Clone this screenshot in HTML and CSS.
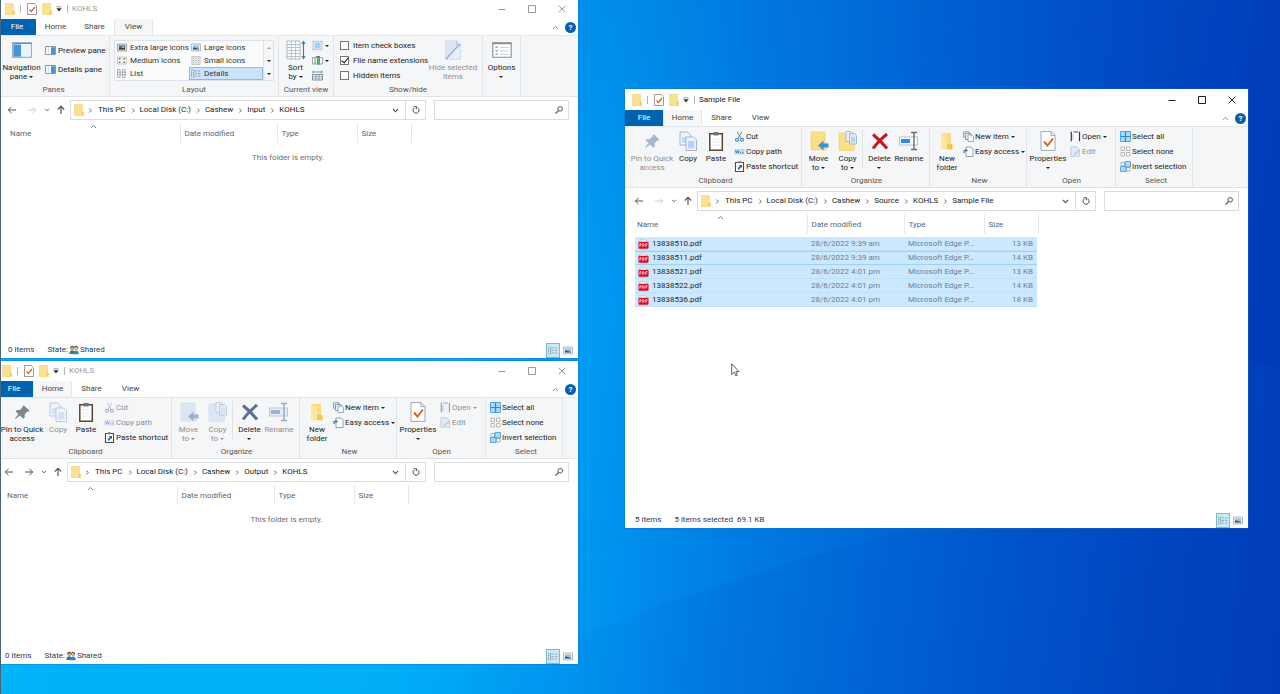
FILE: index.html
```html
<!DOCTYPE html>
<html lang="en">
<head>
<meta charset="utf-8">
<title>Desktop</title>
<link rel="stylesheet" href="styles.css">
</head>
<body>
<svg class="sprite" aria-hidden="true">
  <linearGradient id="fade" x1="0" x2="1"><stop offset="0" stop-color="#0048b8" stop-opacity="0"/><stop offset=".4" stop-color="#0048b8" stop-opacity=".12"/><stop offset="1" stop-color="#0048b8" stop-opacity="0"/></linearGradient>
  <symbol id="folder" viewBox="0 0 10 12"><path d="M.5.5h8v7l1 .6v3.4h-9z" fill="#fbe293"/><path d="M.5.5h8v7l1 .6v3.4h-9z" fill="none" stroke="#efd06d" stroke-width=".6"/><path d="M7.6 8h1.9v3.4H7.6z" fill="#f2cb5c"/></symbol>
  <symbol id="check" viewBox="0 0 10 12"><path d="M.5.5h6.700l2.300 2.300v8.700h-9z" fill="#fff" stroke="#9a9a9a"/><path d="M2.500 6.500l1.800 2L8 4" fill="none" stroke="#d0603a" stroke-width="1.200"/></symbol>
  <symbol id="qat" viewBox="0 0 6 6"><path d="M.5.8h5M.8 2.500h4.400L3 5.200z" fill="#333" stroke="#333" stroke-width=".5"/></symbol>
  <symbol id="min" viewBox="0 0 8 8"><path d="M.5 4.500h7" stroke="currentColor"/></symbol>
  <symbol id="max" viewBox="0 0 8 8"><path d="M.5.5h7v7h-7z" fill="none" stroke="currentColor"/></symbol>
  <symbol id="close" viewBox="0 0 8 8"><path d="M.7.7l6.600 6.600M7.300.7L.7 7.300" stroke="currentColor"/></symbol>
  <symbol id="up-caret" viewBox="0 0 7 5"><path d="M1 4l2.500-2.600L6 4" fill="none" stroke="currentColor" stroke-width=".9"/></symbol>
  <symbol id="dn-caret" viewBox="0 0 7 5"><path d="M1 1l2.500 2.600L6 1" fill="none" stroke="currentColor" stroke-width="1.100"/></symbol>
  <symbol id="rt-caret" viewBox="0 0 5 7"><path d="M1.300 1.500l2 2-2 2" fill="none" stroke="currentColor" stroke-width=".9"/></symbol>
  <symbol id="back" viewBox="0 0 10 10"><path d="M9 5H1.300M4.500 1.800L1.300 5l3.200 3.200" fill="none" stroke="currentColor"/></symbol>
  <symbol id="fwd" viewBox="0 0 10 10"><path d="M1 5h7.700M5.500 1.800L8.700 5 5.500 8.200" fill="none" stroke="currentColor"/></symbol>
  <symbol id="up" viewBox="0 0 10 10"><path d="M5 9V1.300M1.800 4.500L5 1.300l3.200 3.200" fill="none" stroke="currentColor" stroke-width="1.200"/></symbol>
  <symbol id="refresh" viewBox="0 0 10 10"><path d="M3.300 2.800A3 3 0 1 0 6.800 2.800M2.600 1.800l3-.2-.3 2.600" fill="none" stroke="currentColor"/></symbol>
  <symbol id="search" viewBox="0 0 10 10"><circle cx="6.200" cy="3.800" r="2.300" fill="none" stroke="currentColor"/><path d="M4.600 5.500L1.500 8.600" stroke="currentColor" stroke-width="1.200"/></symbol>
  <symbol id="pin" viewBox="0 0 20 20"><path d="M12 3.500l5.500 5.200-1.200 1-1-.2-2.700 3 .1 3-1.400 1.200-3.300-3.300L3.500 17l-.6-.2 3.600-4.700-3-2.700L5 8l3-.1 2.600-2.700-.1-.9z" fill="var(--pin,#a9b7cc)"/></symbol>
  <symbol id="copy" viewBox="0 0 20 20"><path d="M2 1h7.500l3 3v10H2z" fill="#eef4fc" stroke="var(--ln,#94a6bf)" stroke-width=".8"/><path d="M4 6h6v6H4z" fill="var(--in,#c5daf3)"/><path d="M8 6h7.500l3 3v10.500H8z" fill="#f0f5fd" stroke="var(--ln,#94a6bf)" stroke-width=".8"/><path d="M10 10h6.500v7.500H10z" fill="var(--in,#b9d3f2)"/></symbol>
  <symbol id="paste" viewBox="0 0 20 20"><path d="M3.800 2.800h12.500v16.400H3.800z" fill="#fff" stroke="#5d4630" stroke-width="1.500"/><path d="M7.500 1h5v3.500h-5z" fill="#70757c"/><path d="M6 8h8M6 11h8M6 14h8" stroke="#dbe3ee" stroke-width=".8"/></symbol>
  <symbol id="cut" viewBox="0 0 11 11"><path d="M3.200 1l4 6.500M7.800 1l-4 6.500" stroke="var(--ln,#6b7688)" stroke-width=".9"/><circle cx="3" cy="8.700" r="1.500" fill="none" stroke="var(--arr,#2f87c9)" stroke-width="1.100"/><circle cx="8" cy="8.700" r="1.500" fill="none" stroke="var(--arr,#2f87c9)" stroke-width="1.100"/></symbol>
  <symbol id="path" viewBox="0 0 11 11"><path d="M.5 3h10v5.500H.5z" fill="var(--in,#b7d6f1)"/><path d="M1.500 4.500l1 2.500 1-2.500M4.500 5v2M6.200 6.800h.8M8 6.800h1.500" fill="none" stroke="var(--deep,#2d6da6)" stroke-width=".9"/></symbol>
  <symbol id="shortcut" viewBox="0 0 11 11"><path d="M1.500 1.500h8v9h-8z" fill="#fff" stroke="#57473a" stroke-width="1.100"/><path d="M4 .3h3v1.900H4z" fill="#777"/><path d="M3 4h5v5H3z" fill="#e5effb"/><path d="M4 8.500V7l2-2-1-1h3v3L7 6 5 8.500z" fill="#1e5da8"/></symbol>
  <symbol id="move" viewBox="0 0 20 20"><path d="M2 1h14v10l1.500 1v7H2z" fill="var(--fold,#fbdf86)" stroke="var(--fedge,#efcf6c)" stroke-width=".6"/><path d="M19.500 12.500v4h-5V19.500L9 14.500l5.500-5v3z" fill="var(--arr,#3a94d4)"/></symbol>
  <symbol id="copyto" viewBox="0 0 20 20"><path d="M1 2h14v10l1.500 1v6.500H1z" fill="var(--fold,#fbdf86)" stroke="var(--fedge,#efcf6c)" stroke-width=".6"/><path d="M8 .5h5l1.500 1.500v8.500H8z" fill="#eaf1fa" stroke="var(--ln,#8fa2bb)" stroke-width=".7"/><path d="M11.500 2.500h5L18.500 4.500v8.500h-7z" fill="#dfeaf7" stroke="var(--ln,#8fa2bb)" stroke-width=".7"/><path d="M13 6h4v5h-4z" fill="var(--in,#b9d3ee)"/></symbol>
  <symbol id="delete" viewBox="0 0 20 20"><path d="M3 3.500Q10 9 17 17.500M17 3Q9 9 3 17.500" fill="none" stroke="var(--x,#c8161d)" stroke-width="3"/></symbol>
  <symbol id="rename" viewBox="0 0 20 20"><path d="M.5 6h18v8H.5z" fill="var(--box,#fff)" stroke="var(--ln,#9eb2ca)" stroke-width=".8"/><path d="M2 8h9v4H2z" fill="var(--arr,#2c8ae0)"/><path d="M12 1.500h6M12 18.500h6M15 1.500v17" stroke="var(--ibeam,#666d78)" stroke-width="1.400"/></symbol>
  <symbol id="newfolder" viewBox="0 0 20 20"><path d="M4 2h10v11l2 1v4H4z" fill="#fbdc7d"/><path d="M4 2l6 3v14l-6-2z" fill="#ffe79c"/><path d="M10 13h5v5.500l-5-.5z" fill="#f0c654"/></symbol>
  <symbol id="newitem" viewBox="0 0 11 11"><path d="M.5.800h5.500v5.500H.5z" fill="#dbeaf7" stroke="#62839c" stroke-width=".7"/><path d="M2.500 2.500H8v6H2.500z" fill="#e9f2fa" stroke="#62839c" stroke-width=".7"/><path d="M5 4h4l1.500 1.500v5H5z" fill="#f8fafc" stroke="#7b8995" stroke-width=".7"/></symbol>
  <symbol id="easy" viewBox="0 0 11 11"><path d="M3 1h5l2 2v7.500H3z" fill="#fff" stroke="#818b94" stroke-width=".8"/><path d="M.5 7V4h2V2.500L5 4.500 2.500 6.300V5H1.700v2z" fill="#347fae"/></symbol>
  <symbol id="props" viewBox="0 0 20 20"><path d="M3 .600h10l4 4v14.800H3z" fill="#fff" stroke="#8b929b" stroke-width=".8"/><path d="M13 .600v4h4" fill="none" stroke="#8b929b" stroke-width=".8"/><path d="M6 10.500l3.500 4L15 7.500" fill="none" stroke="#db6323" stroke-width="2"/></symbol>
  <symbol id="open" viewBox="0 0 11 11"><path d="M.8.800h9.400v9.400H.8z" fill="var(--pg,#fff)"/><path d="M1.300.800v9.400M9.500.800v9.400" stroke="var(--deep,#26395c)" stroke-width="1.200"/><path d="M3.500 1h4.500" stroke="var(--deep,#26395c)" stroke-width=".9"/><path d="M3 3v6" stroke="var(--arr,#a9bdd8)" stroke-width=".8"/></symbol>
  <symbol id="edit" viewBox="0 0 11 11"><path d="M1 .800h6l2.500 2.500v7H1z" fill="#e2eaf7" stroke="#b9c6dd" stroke-width=".8"/><path d="M3 8.500l5.500-5 1.500 1.500-5.500 4.500z" fill="#c1cfe6"/></symbol>
  <symbol id="selall" viewBox="0 0 11 11"><path d="M.5.500h10v10H.5z" fill="#a8d8fb" stroke="#4fa7e4"/><path d="M5.500.5v10M.5 5.500h10" stroke="#3488cc" stroke-width="1.200"/></symbol>
  <symbol id="selnone" viewBox="0 0 11 11"><path d="M1 1h3.500v3.500H1zM6.500 1H10v3.500H6.500zM1 6.500h3.500V10H1zM6.500 6.500H10V10H6.500z" fill="#fff" stroke="#a5a9ad" stroke-width=".8"/></symbol>
  <symbol id="invert" viewBox="0 0 11 11"><path d="M1 1.500h3.500V5H1zM6.500 6.500H10V10H6.500z" fill="#fff" stroke="#8fa0ae" stroke-width=".8"/><path d="M5 .5h5.500V6H5zM.5 5.500H6v5H.5z" fill="#a8d8fb" stroke="#4698d6" stroke-width=".8"/></symbol>
  <symbol id="navpane" viewBox="0 0 20 16"><path d="M.8.800h18.400v14.400H.8z" fill="#fff" stroke="#8b99a8" stroke-width="1.200"/><path d="M1.500 2.500H9v12H1.500z" fill="#3d97de"/><path d="M.8 1.500h18.400" stroke="#77899b"/><path d="M9 2.500h10v12H9z" fill="#eaf4fd"/></symbol>
  <symbol id="pane" viewBox="0 0 11 9"><path d="M.5.500h10v8H.5z" fill="#fff" stroke="#71808f" stroke-width=".8"/><path d="M6 1.200h4v6.800H6z" fill="#3d97de"/><path d="M3.300 1v7.500" stroke="#b6c2cd" stroke-width=".7"/></symbol>
  <symbol id="xl" viewBox="0 0 10 8"><path d="M.5.500h9v7h-9z" fill="#ddd" stroke="#8d9297" stroke-width=".8"/><path d="M2 2h6v4H2z" fill="#3e6dae"/><path d="M2 4.500h6V6H2z" fill="#3c4030"/><path d="M5 3h2v1.500H5z" fill="#e7bb44"/></symbol>
  <symbol id="lg" viewBox="0 0 10 8"><path d="M.5.500h9v7h-9z" fill="#eee" stroke="#a5aaae" stroke-width=".8"/><path d="M2 2h6v4H2z" fill="#8cc4e8"/><path d="M2 6V4l2 .2L8 5.500V6z" fill="#2a5578"/></symbol>
  <symbol id="md" viewBox="0 0 10 8"><path d="M.5.500h9v7h-9z" fill="#f5f5f5" stroke="#b2b5b8" stroke-width=".7"/><path d="M2 1.500h1.500V3H2zM6.500 5H8v1.500H6.500z" fill="#4d7b59"/><path d="M6.500 1.500H8V3H6.500zM2 5h1.500v1.500H2z" fill="#b3584d"/></symbol>
  <symbol id="sm" viewBox="0 0 10 10"><path d="M.5.500h9v9h-9z" fill="#f2f2f2" stroke="#aaa" stroke-width=".7"/><path d="M2 2.500h6M2 5h6M2 7.500h6" stroke="#777" stroke-dasharray="1 1.500"/></symbol>
  <symbol id="list" viewBox="0 0 10 9"><path d="M.5.500H3v8H.5zM5.500.500H8v8H5.500z" fill="#fff" stroke="#8d9399" stroke-width=".7"/><path d="M.5 3.200H4.500M.5 5.800H4.500M5.500 3.200h4M5.500 5.800h4" stroke="#8d9399" stroke-width=".8"/></symbol>
  <symbol id="details" viewBox="0 0 12 9"><path d="M.5.500H3v8H.5z" fill="#fff" stroke="#7e8994" stroke-width=".7"/><path d="M4 1.500h3M4 4.500h3M4 7.500h3M8.300 1.500h3M8.300 4.500h3M8.300 7.500h3" stroke="#718ba3" stroke-width=".8"/><path d="M.5 3.200H3M.5 5.800H3" stroke="#7e8994" stroke-width=".6"/></symbol>
  <symbol id="sort" viewBox="0 0 20 20"><path d="M1 1h13v18H1z" fill="#fff" stroke="#a2acb6" stroke-width=".8"/><path d="M1 4.500h13M1 7.500h13M1 10.500h13M1 13.500h13M1 16.500h13M5.300 1v18M9.600 1v18" stroke="#a9b6c2" stroke-width=".8"/><path d="M17.500 2v16M16 4l1.500-2.500L19 4M16 16l1.500 2.500L19 16" fill="none" stroke="#2a81b4" stroke-width="1.100"/></symbol>
  <symbol id="groupby" viewBox="0 0 11 10"><path d="M2.500 2h6v6h-6z" fill="#9fd0f7"/><path d="M1 .5v9M10 .5v9M1 .800h9M1 9.200h9" stroke="#8496a6" stroke-width=".8" stroke-dasharray="1.500 .8"/></symbol>
  <symbol id="addcol" viewBox="0 0 11 10"><path d="M.5 2h10v6.500H.5z" fill="#fff" stroke="#84909b" stroke-width=".8"/><path d="M5 1.500h3v7.500H5z" fill="#40b750"/><path d="M4 1h4M3 2v6.500" stroke="#4d5a63" stroke-width=".8"/></symbol>
  <symbol id="sizecol" viewBox="0 0 11 10"><path d="M.5 1.500h10M2 .3L.6 1.500 2 2.800M9 .3l1.400 1.200L9 2.800" fill="none" stroke="#318bb9" stroke-width=".8"/><path d="M.5 4h10v5.500H.5z" fill="#fff" stroke="#68747e" stroke-width=".8"/><path d="M.5 5.800h10M.5 7.600h10M4 4v5.500M7 4v5.500" stroke="#7d8993" stroke-width=".7"/></symbol>
  <symbol id="hide" viewBox="0 0 18 20"><path d="M1.500.8h11l4 4v14.400h-15z" fill="#e8eef9" stroke="#b9c6de" stroke-width=".8" stroke-dasharray="1.500 .8"/><path d="M2 .8h10l4 4L2 19z" fill="#dbe5f6"/><path d="M2 19L16 4" stroke="#94a8cf" stroke-width="1.100"/><path d="M12.500.8v4h4" fill="none" stroke="#b9c6de"/></symbol>
  <symbol id="options" viewBox="0 0 20 16"><path d="M.8.800h18.400v14.400H.8z" fill="#fff" stroke="#858b92" stroke-width="1.100"/><path d="M.8 1.500h18.400" stroke="#858b92" stroke-width="1.400"/><path d="M3.500 5l1 1 1.200-2M3.500 8.500l1 1 1.200-2M3.500 12l1 1 1.200-2" fill="none" stroke="#3d82bd" stroke-width=".9"/><path d="M8 5.500h9M8 9h9M8 12.500h9" stroke="#c1c5c9" stroke-width=".8"/></symbol>
  <symbol id="people" viewBox="0 0 11 10"><circle cx="3.500" cy="2.500" r="2.200" fill="#5d4938"/><circle cx="3.700" cy="3.300" r="1.500" fill="#d9a982"/><path d="M.3 9.500Q.5 5.200 3.500 5.200T7 9.500z" fill="#3f7f58"/><circle cx="7.800" cy="2.400" r="2.200" fill="#695036"/><circle cx="7.700" cy="3.200" r="1.500" fill="#e5bb94"/><path d="M4.500 9.800Q4.800 5.500 7.800 5.500t3 4.300z" fill="#3485c7"/></symbol>
  <symbol id="pdf" viewBox="0 0 12 11"><path d="M2 .5h6l2 2v8H2z" fill="#fff" stroke="#c4a2a6" stroke-width=".6"/><rect x=".5" y="2.500" width="11" height="7.500" rx="1" fill="#cf1126"/><path d="M2 8V4.500h1.200q.8 1-.1 1.800H2M5 4.500V7.500q2 0 2-1.500t-2-1.500M8.500 8V4.500h2M8.500 6.200h1.500" fill="none" stroke="#fff" stroke-width=".7"/></symbol>
</svg>

<main class="desktop">
  <svg class="beams" viewBox="0 0 1280 694" preserveAspectRatio="none" aria-hidden="true">
    <path d="M560 137L660 160 1280 370V694H0V694z" fill="#0095ff" opacity=".05"/>
    <path d="M940 522Q780 560 600 628L420 694H1280V522z" fill="url(#fade)"/>
    <path d="M560 555L640 545 640 700 560 700z" fill="#00a8ff" opacity=".08"/>
  </svg>

  <section class="window win-input inactive">
    <header class="titlebar">
      <svg class="ic-folder"><use href="#folder"/></svg><i class="bar"></i><svg class="ic-folder check"><use href="#check"/></svg><svg class="ic-folder"><use href="#folder"/></svg><svg class="ic-qat"><use href="#qat"/></svg><i class="bar"></i>
      <h1>KOHLS</h1>
      <div class="controls"><button aria-label="Minimize"><svg><use href="#min"/></svg></button><button aria-label="Maximize"><svg><use href="#max"/></svg></button><button aria-label="Close"><svg><use href="#close"/></svg></button></div>
    </header>
    <nav class="tabs">
      <button class="file">File</button><button>Home</button><button>Share</button><button class="active">View</button>
      <div class="tab-end"><svg class="caret"><use href="#up-caret"/></svg><button class="help" aria-label="Help">?</button></div>
    </nav>
    <div class="ribbon">
      <div class="group g-panes">
        <div class="tools">
          <button class="big w-nav"><svg class="wide"><use href="#navpane"/></svg><span>Navigation<br>pane <i class="tri"></i></span></button>
          <div class="stack loose"><button class="small"><svg class="short"><use href="#pane"/></svg>Preview pane</button><button class="small"><svg class="short"><use href="#pane"/></svg>Details pane</button></div>
        </div>
        <div class="caption">Panes</div>
      </div>
      <div class="group g-layout">
        <div class="tools">
          <div class="gallery">
            <button><svg><use href="#xl"/></svg>Extra large icons</button><button><svg><use href="#lg"/></svg>Large icons</button>
            <button><svg><use href="#md"/></svg>Medium icons</button><button><svg><use href="#sm"/></svg>Small icons</button>
            <button><svg><use href="#list"/></svg>List</button><button class="picked"><svg><use href="#details"/></svg>Details</button>
          </div>
          <div class="scroller"><button aria-label="Scroll up"><i class="tri up"></i></button><button aria-label="Scroll down"><i class="tri"></i></button><button aria-label="More layouts"><i class="tri more"></i></button></div>
        </div>
        <div class="caption">Layout</div>
      </div>
      <div class="group g-current">
        <div class="tools">
          <button class="big w-sort"><svg><use href="#sort"/></svg><span>Sort<br>by <i class="tri"></i></span></button>
          <div class="stack"><button class="small" aria-label="Group by"><svg><use href="#groupby"/></svg><i class="tri"></i></button><button class="small" aria-label="Add columns"><svg><use href="#addcol"/></svg><i class="tri"></i></button><button class="small" aria-label="Size all columns to fit"><svg><use href="#sizecol"/></svg></button></div>
        </div>
        <div class="caption">Current view</div>
      </div>
      <div class="group g-show">
        <div class="tools">
          <div class="stack checks"><label><input type="checkbox">Item check boxes</label><label><input type="checkbox" checked>File name extensions</label><label><input type="checkbox">Hidden items</label></div>
          <button class="big w-hide off" disabled><svg><use href="#hide"/></svg><span>Hide selected<br>items</span></button>
        </div>
        <div class="caption">Show/hide</div>
      </div>
      <div class="group g-options">
        <div class="tools"><button class="big w-options"><svg class="wide"><use href="#options"/></svg><span>Options<br><i class="tri"></i></span></button></div>
      </div>
    </div>
    <div class="address">
      <button class="nav" aria-label="Back"><svg><use href="#back"/></svg></button><button class="nav forward faint" aria-label="Forward"><svg><use href="#fwd"/></svg></button><button class="nav recent" aria-label="Recent"><svg class="caret"><use href="#dn-caret"/></svg></button><button class="nav upward" aria-label="Up"><svg><use href="#up"/></svg></button>
      <div class="path">
        <svg class="ic-folder"><use href="#folder"/></svg>
        <svg class="sep"><use href="#rt-caret"/></svg><button>This PC</button><svg class="sep"><use href="#rt-caret"/></svg><button>Local Disk (C:)</button><svg class="sep"><use href="#rt-caret"/></svg><button>Cashew</button><svg class="sep"><use href="#rt-caret"/></svg><button>Input</button><svg class="sep"><use href="#rt-caret"/></svg><button>KOHLS</button>
        <button class="drop" aria-label="Previous locations"><svg class="caret"><use href="#dn-caret"/></svg></button><button class="reload" aria-label="Refresh"><svg><use href="#refresh"/></svg></button>
      </div>
      <div class="search"><input type="text" aria-label="Search"><svg><use href="#search"/></svg></div>
    </div>
    <div class="content">
      <table><thead><tr><th class="c-name">Name<svg class="caret sorted"><use href="#up-caret"/></svg></th><th class="c-date">Date modified</th><th class="c-type">Type</th><th class="c-size">Size</th></tr></thead></table>
      <p class="empty">This folder is empty.</p>
    </div>
    <footer class="status"><span>0 items</span><span class="state">State:<svg><use href="#people"/></svg>Shared</span><div class="views"><button class="on" aria-label="Details view"><svg><use href="#details"/></svg></button><button aria-label="Thumbnail view"><svg><use href="#lg"/></svg></button></div></footer>
  </section>

  <section class="window win-output inactive">
    <header class="titlebar">
      <svg class="ic-folder"><use href="#folder"/></svg><i class="bar"></i><svg class="ic-folder check"><use href="#check"/></svg><svg class="ic-folder"><use href="#folder"/></svg><svg class="ic-qat"><use href="#qat"/></svg><i class="bar"></i>
      <h1>KOHLS</h1>
      <div class="controls"><button aria-label="Minimize"><svg><use href="#min"/></svg></button><button aria-label="Maximize"><svg><use href="#max"/></svg></button><button aria-label="Close"><svg><use href="#close"/></svg></button></div>
    </header>
    <nav class="tabs">
      <button class="file">File</button><button class="active">Home</button><button>Share</button><button>View</button>
      <div class="tab-end"><svg class="caret"><use href="#up-caret"/></svg><button class="help" aria-label="Help">?</button></div>
    </nav>
    <div class="ribbon">
      <div class="group g-clip">
        <div class="tools">
          <button class="big w-pin pin-on"><svg><use href="#pin"/></svg><span>Pin to Quick<br>access</span></button>
          <button class="big w-copy off" disabled><svg><use href="#copy"/></svg><span>Copy</span></button>
          <button class="big w-paste"><svg><use href="#paste"/></svg><span>Paste</span></button>
          <div class="stack"><button class="small off" disabled><svg><use href="#cut"/></svg>Cut</button><button class="small off" disabled><svg><use href="#path"/></svg>Copy path</button><button class="small"><svg><use href="#shortcut"/></svg>Paste shortcut</button></div>
        </div>
        <div class="caption">Clipboard</div>
      </div>
      <div class="group g-org">
        <div class="tools">
          <button class="big w-move off" disabled><svg><use href="#move"/></svg><span>Move<br>to <i class="tri"></i></span></button>
          <button class="big w-move off" disabled><svg><use href="#copyto"/></svg><span>Copy<br>to <i class="tri"></i></span></button>
          <i class="rule"></i>
          <button class="big w-delete delete-idle"><svg><use href="#delete"/></svg><span>Delete<br><i class="tri"></i></span></button>
          <button class="big w-rename off" disabled><svg><use href="#rename"/></svg><span>Rename</span></button>
        </div>
        <div class="caption">Organize</div>
      </div>
      <div class="group g-new">
        <div class="tools">
          <button class="big w-new"><svg><use href="#newfolder"/></svg><span>New<br>folder</span></button>
          <div class="stack"><button class="small"><svg><use href="#newitem"/></svg>New item <i class="tri"></i></button><button class="small"><svg><use href="#easy"/></svg>Easy access <i class="tri"></i></button></div>
        </div>
        <div class="caption">New</div>
      </div>
      <div class="group g-open">
        <div class="tools">
          <button class="big w-props"><svg><use href="#props"/></svg><span>Properties<br><i class="tri"></i></span></button>
          <div class="stack"><button class="small off" disabled><svg><use href="#open"/></svg>Open <i class="tri"></i></button><button class="small off" disabled><svg><use href="#edit"/></svg>Edit</button></div>
        </div>
        <div class="caption">Open</div>
      </div>
      <div class="group g-select">
        <div class="tools"><div class="stack"><button class="small"><svg><use href="#selall"/></svg>Select all</button><button class="small"><svg><use href="#selnone"/></svg>Select none</button><button class="small"><svg><use href="#invert"/></svg>Invert selection</button></div></div>
        <div class="caption">Select</div>
      </div>
    </div>
    <div class="address">
      <button class="nav" aria-label="Back"><svg><use href="#back"/></svg></button><button class="nav forward" aria-label="Forward"><svg><use href="#fwd"/></svg></button><button class="nav recent" aria-label="Recent"><svg class="caret"><use href="#dn-caret"/></svg></button><button class="nav upward" aria-label="Up"><svg><use href="#up"/></svg></button>
      <div class="path">
        <svg class="ic-folder"><use href="#folder"/></svg>
        <svg class="sep"><use href="#rt-caret"/></svg><button>This PC</button><svg class="sep"><use href="#rt-caret"/></svg><button>Local Disk (C:)</button><svg class="sep"><use href="#rt-caret"/></svg><button>Cashew</button><svg class="sep"><use href="#rt-caret"/></svg><button>Output</button><svg class="sep"><use href="#rt-caret"/></svg><button>KOHLS</button>
        <button class="drop" aria-label="Previous locations"><svg class="caret"><use href="#dn-caret"/></svg></button><button class="reload" aria-label="Refresh"><svg><use href="#refresh"/></svg></button>
      </div>
      <div class="search"><input type="text" aria-label="Search"><svg><use href="#search"/></svg></div>
    </div>
    <div class="content">
      <table><thead><tr><th class="c-name">Name<svg class="caret sorted"><use href="#up-caret"/></svg></th><th class="c-date">Date modified</th><th class="c-type">Type</th><th class="c-size">Size</th></tr></thead></table>
      <p class="empty">This folder is empty.</p>
    </div>
    <footer class="status"><span>0 items</span><span class="state">State:<svg><use href="#people"/></svg>Shared</span><div class="views"><button class="on" aria-label="Details view"><svg><use href="#details"/></svg></button><button aria-label="Thumbnail view"><svg><use href="#lg"/></svg></button></div></footer>
  </section>

  <section class="window win-source">
    <header class="titlebar">
      <svg class="ic-folder"><use href="#folder"/></svg><i class="bar"></i><svg class="ic-folder check"><use href="#check"/></svg><svg class="ic-folder"><use href="#folder"/></svg><svg class="ic-qat"><use href="#qat"/></svg><i class="bar"></i>
      <h1>Sample File</h1>
      <div class="controls"><button aria-label="Minimize"><svg><use href="#min"/></svg></button><button aria-label="Maximize"><svg><use href="#max"/></svg></button><button aria-label="Close"><svg><use href="#close"/></svg></button></div>
    </header>
    <nav class="tabs">
      <button class="file">File</button><button class="active">Home</button><button>Share</button><button>View</button>
      <div class="tab-end"><svg class="caret"><use href="#up-caret"/></svg><button class="help" aria-label="Help">?</button></div>
    </nav>
    <div class="ribbon">
      <div class="group g-clip">
        <div class="tools">
          <button class="big w-pin off" disabled><svg><use href="#pin"/></svg><span>Pin to Quick<br>access</span></button>
          <button class="big w-copy"><svg><use href="#copy"/></svg><span>Copy</span></button>
          <button class="big w-paste"><svg><use href="#paste"/></svg><span>Paste</span></button>
          <div class="stack"><button class="small"><svg><use href="#cut"/></svg>Cut</button><button class="small"><svg><use href="#path"/></svg>Copy path</button><button class="small"><svg><use href="#shortcut"/></svg>Paste shortcut</button></div>
        </div>
        <div class="caption">Clipboard</div>
      </div>
      <div class="group g-org">
        <div class="tools">
          <button class="big w-move"><svg><use href="#move"/></svg><span>Move<br>to <i class="tri"></i></span></button>
          <button class="big w-move"><svg><use href="#copyto"/></svg><span>Copy<br>to <i class="tri"></i></span></button>
          <i class="rule"></i>
          <button class="big w-delete"><svg><use href="#delete"/></svg><span>Delete<br><i class="tri"></i></span></button>
          <button class="big w-rename"><svg><use href="#rename"/></svg><span>Rename</span></button>
        </div>
        <div class="caption">Organize</div>
      </div>
      <div class="group g-new">
        <div class="tools">
          <button class="big w-new"><svg><use href="#newfolder"/></svg><span>New<br>folder</span></button>
          <div class="stack"><button class="small"><svg><use href="#newitem"/></svg>New item <i class="tri"></i></button><button class="small"><svg><use href="#easy"/></svg>Easy access <i class="tri"></i></button></div>
        </div>
        <div class="caption">New</div>
      </div>
      <div class="group g-open">
        <div class="tools">
          <button class="big w-props"><svg><use href="#props"/></svg><span>Properties<br><i class="tri"></i></span></button>
          <div class="stack"><button class="small"><svg><use href="#open"/></svg>Open <i class="tri"></i></button><button class="small off" disabled><svg><use href="#edit"/></svg>Edit</button></div>
        </div>
        <div class="caption">Open</div>
      </div>
      <div class="group g-select">
        <div class="tools"><div class="stack"><button class="small"><svg><use href="#selall"/></svg>Select all</button><button class="small"><svg><use href="#selnone"/></svg>Select none</button><button class="small"><svg><use href="#invert"/></svg>Invert selection</button></div></div>
        <div class="caption">Select</div>
      </div>
    </div>
    <div class="address">
      <button class="nav" aria-label="Back"><svg><use href="#back"/></svg></button><button class="nav forward faint" aria-label="Forward"><svg><use href="#fwd"/></svg></button><button class="nav recent" aria-label="Recent"><svg class="caret"><use href="#dn-caret"/></svg></button><button class="nav upward" aria-label="Up"><svg><use href="#up"/></svg></button>
      <div class="path">
        <svg class="ic-folder"><use href="#folder"/></svg>
        <svg class="sep"><use href="#rt-caret"/></svg><button>This PC</button><svg class="sep"><use href="#rt-caret"/></svg><button>Local Disk (C:)</button><svg class="sep"><use href="#rt-caret"/></svg><button>Cashew</button><svg class="sep"><use href="#rt-caret"/></svg><button>Source</button><svg class="sep"><use href="#rt-caret"/></svg><button>KOHLS</button><svg class="sep"><use href="#rt-caret"/></svg><button>Sample File</button>
        <button class="drop" aria-label="Previous locations"><svg class="caret"><use href="#dn-caret"/></svg></button><button class="reload" aria-label="Refresh"><svg><use href="#refresh"/></svg></button>
      </div>
      <div class="search"><input type="text" aria-label="Search"><svg><use href="#search"/></svg></div>
    </div>
    <div class="content">
      <table>
        <thead><tr><th class="c-name">Name<svg class="caret sorted"><use href="#up-caret"/></svg></th><th class="c-date">Date modified</th><th class="c-type">Type</th><th class="c-size">Size</th></tr></thead>
        <tbody>
          <tr><td><svg><use href="#pdf"/></svg>13838510.pdf</td><td>28/6/2022 9:39 am</td><td>Microsoft Edge P...</td><td>13 KB</td></tr>
          <tr class="focused"><td><svg><use href="#pdf"/></svg>13838511.pdf</td><td>28/6/2022 9:39 am</td><td>Microsoft Edge P...</td><td>14 KB</td></tr>
          <tr><td><svg><use href="#pdf"/></svg>13838521.pdf</td><td>28/6/2022 4:01 pm</td><td>Microsoft Edge P...</td><td>13 KB</td></tr>
          <tr><td><svg><use href="#pdf"/></svg>13838522.pdf</td><td>28/6/2022 4:01 pm</td><td>Microsoft Edge P...</td><td>14 KB</td></tr>
          <tr><td><svg><use href="#pdf"/></svg>13838536.pdf</td><td>28/6/2022 4:01 pm</td><td>Microsoft Edge P...</td><td>18 KB</td></tr>
        </tbody>
      </table>
    </div>
    <footer class="status"><span>5 items</span><span class="state">5 items selected&nbsp; 69.1 KB</span><div class="views"><button class="on" aria-label="Details view"><svg><use href="#details"/></svg></button><button aria-label="Thumbnail view"><svg><use href="#lg"/></svg></button></div></footer>
  </section>

  <i class="screen-edge"></i>
  <svg class="pointer" viewBox="0 0 9 14"><path d="M.7.800v10.700l2.500-2.300 1.500 3.600 1.600-.7-1.500-3.400h3.300z" fill="#fff" stroke="#333" stroke-width=".8"/></svg>
</main>
</body>
</html>
```
FILE: styles.css
```css
* { box-sizing: border-box; }
body { margin: 0; font: 8px/10px Roboto, "Open Sans", sans-serif; color: #222; }
button { border: 0; padding: 0; background: none; font: inherit; color: inherit; white-space: nowrap; }
svg { display: block; flex: none; }
.sprite { position: absolute; width: 0; height: 0; }

.desktop {
  position: relative;
  height: 100vh;
  overflow: hidden;
  background:
    linear-gradient(172deg, rgba(0, 70, 190, .25) 0%, rgba(0, 80, 200, 0) 45%),
    linear-gradient(97deg, #00b6fa 0%, #00b0f8 34%, #009cf2 46%, #0084e6 55%, #006cda 66%, #0053cb 78%, #0041bd 90%, #0037b3 100%);
}
.beams { position: absolute; inset: 0; width: 100%; height: 100%; }
.screen-edge { position: absolute; left: 0; top: 0; bottom: 0; width: 1px; background: #4a6478; }
.pointer { position: absolute; left: 731px; top: 363px; width: 9px; height: 14px; }

/* windows */
.window {
  position: absolute;
  display: flex;
  flex-direction: column;
  background: #fff;
  box-shadow: 0 0 0 1px rgba(20, 110, 190, .4);
}
.win-input { left: -2px; top: -2px; width: 580px; height: 360px; }
.win-output { left: -5px; top: 361px; width: 583px; height: 303px; }
.win-source { left: 625px; top: 89px; width: 623px; height: 439px; }

.titlebar { display: flex; align-items: center; height: 21px; padding-left: 7px; }
.win-output .titlebar { height: 20px; }
.titlebar h1 { margin: 0 0 0 4px; font-size: 8px; font-weight: 400; }
.inactive h1, .inactive .controls { color: #999; }
.ic-folder { width: 10px; height: 12px; }
.bar { width: 1px; height: 8px; margin-left: 5px; background: #b5b5b5; }
.titlebar .check { margin: 0 5px 0 6px; }
.ic-qat { width: 6px; height: 6px; margin-left: 4px; }
.controls { display: flex; margin: 0 1px 0 auto; }
.controls button { width: 30px; height: 20px; display: grid; place-items: center; }
.controls svg { width: 8px; height: 8px; }

.tabs { display: flex; height: 16px; }
.tabs > button { width: 39px; color: #444; }
.tabs > .file { width: 38px; background: #0063b1; color: #fff; }
.tabs > .active { border: 1px solid #e3e6e9; border-width: 0 1px; background: #f5f6f7; }
.tab-end { display: flex; align-items: center; gap: 6px; margin-left: auto; padding-right: 2px; color: #8a8a8a; }
.caret { width: 7px; height: 5px; }
.help { width: 11px; height: 11px; border-radius: 50%; background: #0a5cab; color: #fff; font-weight: 700; line-height: 11px; }

/* ribbon */
.ribbon { display: flex; height: 62px; border-top: 1px solid #e3e6e9; border-bottom: 1px solid #e1e4e7; background: #f5f6f7; }
.group { display: flex; flex-direction: column; padding-top: 1px; border-right: 1px solid #e2e5e8; flex: none; }
.tools { display: flex; height: 45px; flex: none; }
.caption { padding-top: 1px; text-align: center; color: #555; line-height: 13px; }
.g-panes { width: 112px; }
.g-layout { width: 169px; }
.g-current { width: 55px; }
.g-show { width: 149px; }
.g-options { width: 38px; }
.g-clip { width: 177px; padding-left: 5px; }
.g-org { width: 128px; padding-left: 2px; }
.g-new { width: 97px; padding-left: 3px; }
.g-open { width: 89px; padding-left: 1px; }
.g-select { width: 77px; padding-left: 4px; }

.big { display: flex; flex-direction: column; align-items: center; gap: 3px; padding-top: 3px; line-height: 9px; }
.big svg { width: 20px; height: 20px; }
.w-nav { width: 47px; }
.w-sort { width: 33px; }
.w-hide { width: 56px; }
.w-options { width: 37px; }
.w-pin { width: 44px; }
.w-copy { width: 28px; }
.w-paste { width: 28px; margin-right: 4px; }
.w-move { width: 29px; }
.w-delete { width: 31px; padding-left: 2px; }
.w-rename { width: 30px; }
.w-new { width: 28px; margin-right: 2px; }
.w-props { width: 40px; margin-right: 2px; }
.rule { width: 1px; height: 38px; margin-top: 2px; background: #dfe2e5; }

.stack { display: flex; flex-direction: column; }
.small { display: flex; align-items: center; gap: 1px; height: 15px; flex: none; }
.small svg { width: 11px; height: 11px; }
.small .short { height: 9px; }
.small .tri { margin-left: 1px; }
.loose { padding-top: 6px; gap: 4px; }
.loose .small { gap: 2px; }
.tri { display: inline-block; border: 2px solid transparent; border-top-color: currentColor; border-bottom-width: 0; vertical-align: middle; }
.tri.up { transform: rotate(180deg); opacity: .4; }
.tri.more { box-shadow: 0 -2px 0 -1px #333; }
.g-clip .stack, .g-new .stack, .g-open .stack, .g-select .stack, .g-current .stack, .checks { padding-top: 1px; }

.off { color: #8d8f94; --fold: #dde6f4; --fedge: #cfdaeb; --arr: #9fb2d3; --ln: #b1bfd8; --in: #d6e1f2; --deep: #8da0c4; --ibeam: #98a8c4; --pg: #edf2fa; --box: #e6edf8; }
.pin-on { --pin: #80868e; }
.delete-idle { --x: #5c6d8f; }

.gallery { display: grid; grid-template-columns: 74px 74px; grid-template-rows: repeat(3, 13px); margin: 3px 0 0 4px; border: 1px solid #dfe3e8; border-right: 0; background: #fafbfc; align-self: flex-start; }
.gallery button { display: flex; align-items: center; gap: 3px; padding-left: 2px; color: #333; }
.gallery svg { width: 10px; height: 9px; }
.gallery .picked { background: #cce4fb; box-shadow: inset 0 0 0 1px #8dbce8; }
.scroller { display: grid; grid-template-rows: repeat(3, 13px); width: 11px; margin-top: 3px; border: 1px solid #dfe3e8; align-self: flex-start; }
.scroller button { display: grid; place-items: center; }
.checks { padding-left: 6px; width: 91px; }
.checks label { display: flex; align-items: center; gap: 4px; height: 15px; flex: none; white-space: nowrap; }
.checks input { appearance: none; display: grid; place-items: center; flex: none; width: 9px; height: 9px; margin: 0; border: 1px solid #777; background: #fff; }
.checks input:checked::before { content: ""; width: 3px; height: 6px; margin-top: -2px; border: solid #111; border-width: 0 1px 1px 0; transform: rotate(40deg); }

/* address row */
.address { display: flex; align-items: center; height: 26px; padding: 0 9px; color: #555; }
.nav { width: 20px; display: grid; justify-items: start; }
.nav svg { width: 10px; height: 10px; }
.forward { width: 17px; }
.faint { color: #cfcfcf; }
.recent { width: 12px; }
.recent .caret { width: 6px; height: 4px; }
.upward { width: 14px; }
.path { flex: 1; display: flex; align-items: center; height: 20px; padding-left: 3px; border: 1px solid #dcdcdc; }
.path button { color: #222; }
.sep { width: 5px; height: 7px; margin: 0 4px 0 5px; }
.path .ic-folder + .sep { margin: 0 5px 0 4px; }
.path .drop, .path .reload { display: grid; place-items: center; width: 20px; height: 18px; color: #555; }
.drop { margin-left: auto; }
.path .reload { border-left: 1px solid #dcdcdc; }
.reload svg { width: 10px; height: 10px; }
.search { display: flex; align-items: center; width: 135px; height: 20px; margin-left: 8px; padding-right: 4px; border: 1px solid #dcdcdc; }
.search input { flex: 1; min-width: 0; border: 0; padding: 0 4px; background: none; font: inherit; outline: 0; }
.search svg { width: 10px; height: 10px; }

/* file list */
.content { flex: 1; padding-left: 10px; }
table { border-collapse: collapse; table-layout: fixed; width: 403px; }
th { position: relative; height: 20px; padding: 2px 4px 0; border-right: 1px solid #e8e8e8; font-weight: 400; text-align: left; color: #56657c; }
th:first-child { padding-left: 2px; }
.c-name { width: 172px; }
.c-date { width: 97px; }
.c-type { width: 80px; }
.c-size { width: 54px; }
.sorted { position: absolute; left: 82px; top: 1px; color: #777; }
tbody::before { content: ""; display: block; height: 3px; }
td { height: 14px; padding: 0 4px; background: #cce8ff; box-shadow: inset 0 -1px 0 #bfe0fb; color: #6f7e8d; white-space: nowrap; overflow: hidden; }
td:first-child { display: flex; align-items: center; gap: 3px; padding-left: 3px; color: #1c2733; }
td:last-child { text-align: right; border-right: 2px solid #fff; padding-right: 4px; }
td svg { width: 11px; height: 11px; }
.focused td { box-shadow: inset 0 1px 0 #9fd1f8, inset 0 -1px 0 #9fd1f8; }
.empty { margin: 10px 10px 0 0; text-align: center; color: #6d6d6d; }

.status { display: flex; align-items: center; height: 16px; padding: 0 3px 0 10px; color: #2a3a55; }
.state { display: flex; align-items: center; gap: 1px; margin-left: 13px; }
.state svg { width: 10px; height: 10px; }
.views { display: flex; align-items: center; gap: 1px; margin-left: auto; }
.views button { display: grid; place-items: center; width: 14px; height: 15px; }
.views .on { background: #c9eaf5; box-shadow: inset 0 0 0 1px #6fbfd9; }
.views svg { width: 10px; height: 9px; }
```
